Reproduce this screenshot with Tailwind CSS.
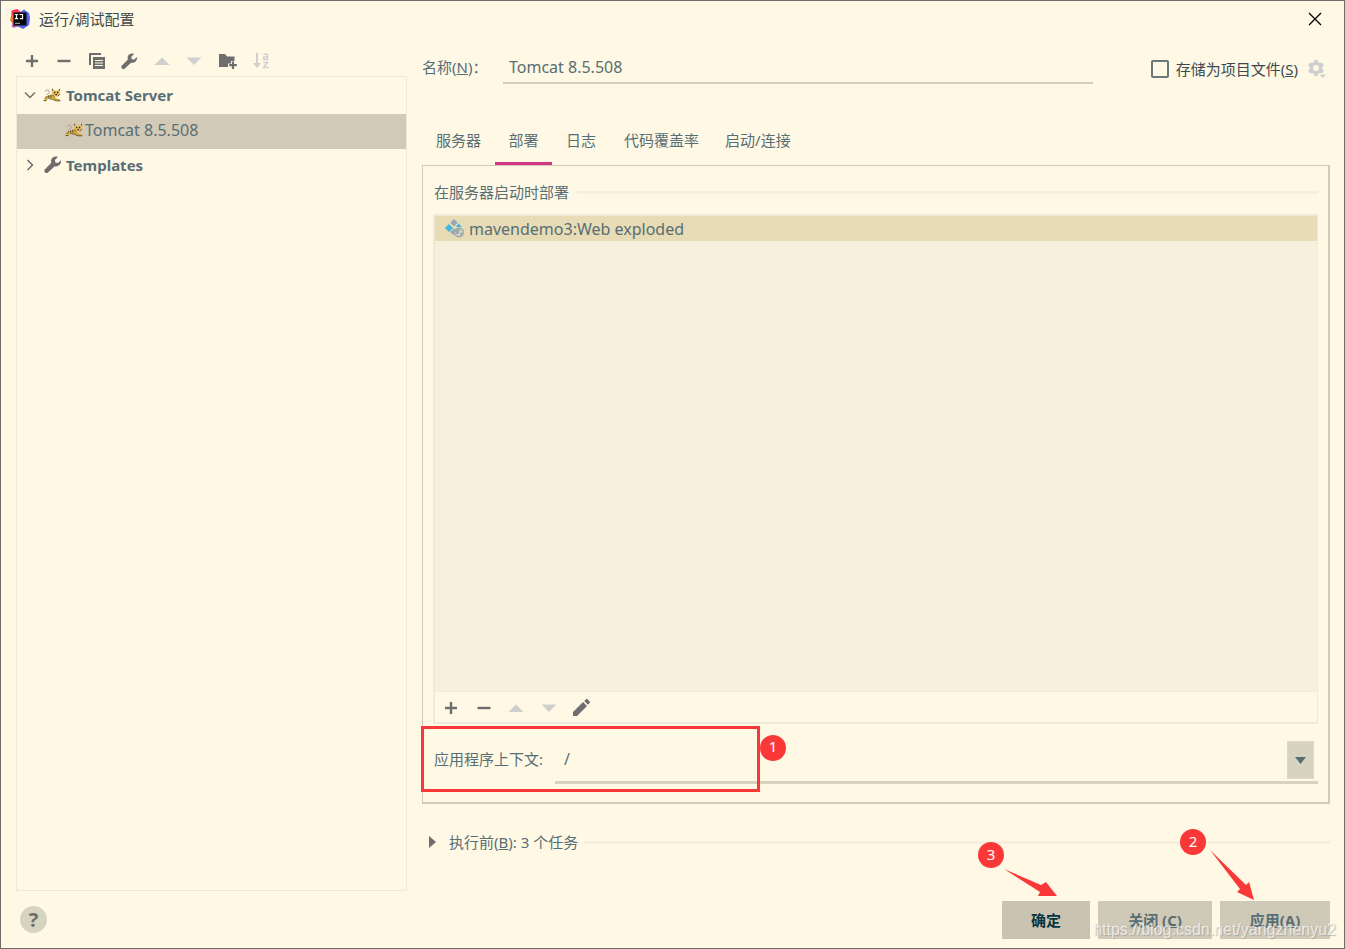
<!DOCTYPE html>
<html lang="zh-CN">
<head>
<meta charset="utf-8">
<title>运行/调试配置</title>
<script src="https://cdn.jsdelivr.net/npm/@tailwindcss/browser@4"></script>
</head>
<body class="bg-[#fff8e4] text-[15px] leading-5 text-[#586e75] font-['Noto_Sans','Noto_Sans_CJK_SC',sans-serif]">
<svg class="hidden">
  <defs>
    <symbol id="plus" viewBox="0 0 16 16"><path d="M8 2v12M2 8h12" stroke="currentColor" stroke-width="2.4" fill="none"/></symbol>
    <symbol id="minus" viewBox="0 0 16 16"><path d="M1.500 8h13" stroke="currentColor" stroke-width="2.400" fill="none"/></symbol>
    <symbol id="up" viewBox="0 0 16 16"><path d="M8 4.500l7.500 7.500H.5z" fill="currentColor"/></symbol>
    <symbol id="down" viewBox="0 0 16 16"><path d="M8 12L.5 4.500h15z" fill="currentColor"/></symbol>
    <symbol id="wrench" viewBox="0 0 18 18"><path d="M17 4.200l-3 2.800-2.600-.4-.5-2.700L13.800 1C11.200 0 8.300 1 7.300 3.500c-.4 1.100-.4 2.200 0 3.300L.8 13.500c-1 1-.4 2.200.3 2.900.8.800 2 1 2.900.1l6.700-6.300c2.900 1 6.900-1.500 6.300-6z" fill="currentColor"/></symbol>
    <symbol id="cat" viewBox="0 0 18 14">
      <path d="M3.500 6.500C6 6 6.800 4.500 6 3 5 1.300 2.500 1.800 2.200 3.800" fill="none" stroke="#a9a698" stroke-width="1"/>
      <path d="M2 11.500L4 8l4-1.500 3 1.500 2.500 2.500 3.500.7v1.300h-3.500L9 10.500 5.500 10 3.500 12.500H1z" fill="#d9a832"/>
      <path d="M.5 12.600h3M5.500 10.500l4 .7 3.500 1.600h4.500M4 8L1.500 11" fill="none" stroke="#5e4a1c" stroke-width=".9"/>
      <path d="M9.300.8l2.200 1.700h3L16.700.8 17 6l-2.500 2.400h-3L9 6z" fill="#e6bd5c"/>
      <path d="M9.400.8v1.800M16.600.8v1.800M5.500 7.500v2M7.800 7v2.500M9.200 6.500l2 2M16.800 6.300l-2 2" stroke="#4a3f22" stroke-width=".9"/>
      <path d="M11 4.500h1.200M14 4.500h1.200M12.500 6.700h1.400" stroke="#201e18" stroke-width="1.300"/>
    </symbol>
  </defs>
</svg>
<div class="relative flex min-h-screen flex-col border border-[#706c69]">
  <header class="flex h-9 items-center pl-[9px] pr-[22px] text-[#3c4a50]">
    <svg class="size-5" viewBox="0 0 20 20">
      <linearGradient id="warm" x1="0" y1="0" x2="0" y2="1"><stop offset="0" stop-color="#fb1f66"/><stop offset=".5" stop-color="#fc7a24"/><stop offset="1" stop-color="#b14ad0"/></linearGradient>
      <linearGradient id="cool" x1="0" y1="0" x2="1" y2="1"><stop offset="0" stop-color="#c644b8"/><stop offset=".4" stop-color="#3f74f0"/><stop offset="1" stop-color="#6a4ff0"/></linearGradient>
      <path d="M1.500 1.500L7 0l5 4v12l-8 2.800-2.300-1 .8-3.300L0 11l1.200-4z" fill="url(#warm)"/><path d="M10 3l4-2.500 5 3.500 1 5-1 7-6 4-6-3z" fill="url(#cool)"/><path d="M3.500 3.500h13v13h-13z" fill="#080808"/><path d="M4.800 5.500h3.400M6.500 5.500v4.300M4.800 9.700h3.400M9.500 5.500h3v4.200H9.800" stroke="#fff" stroke-width="1.200" fill="none"/><path d="M5 14.300h5" stroke="#bbb" stroke-width="1"/></svg>
    <h1 class="ml-[9px] flex-1">运行/调试配置</h1>
    <button aria-label="关闭" class="text-black"><svg class="size-[14px]" viewBox="0 0 14 14"><path d="M1 1l12 12M13 1L1 13" stroke="currentColor" stroke-width="1.300"/></svg></button>
  </header>
  <div class="flex flex-1 pl-[15px] pr-[14px]">
    <aside class="flex w-[391px] shrink-0 flex-col">
      <div class="ml-2 flex h-[39px] w-[245px] items-center justify-between pt-[9px] text-[#6e6e6e]">
        <button aria-label="添加"><svg class="size-4"><use href="#plus"/></svg></button>
        <button aria-label="移除"><svg class="size-4"><use href="#minus"/></svg></button>
        <button aria-label="复制"><svg class="size-4" viewBox="0 0 16 16"><path d="M1 12V1h11" fill="none" stroke="currentColor" stroke-width="2"/><path d="M4 4h12v12H4z" fill="currentColor"/><path d="M6 7.500h8M6 10h8M6 12.500h8" stroke="#fff8e4" stroke-width="1"/></svg></button>
        <button aria-label="编辑模板"><svg class="size-[17px]"><use href="#wrench"/></svg></button>
        <button aria-label="上移" disabled class="text-[#cfcfcf]"><svg class="size-4"><use href="#up"/></svg></button>
        <button aria-label="下移" disabled class="text-[#cfcfcf]"><svg class="size-4"><use href="#down"/></svg></button>
        <button aria-label="新建文件夹"><svg class="h-4 w-[18px]" viewBox="0 0 18 16"><path d="M0 1h6l2 2.500h7.500V8H12v2.500H9V14H0z" fill="currentColor"/><path d="M14 8.500v7.500M10.200 12.200h7.600" stroke="currentColor" stroke-width="2.200"/></svg></button>
        <button aria-label="排序" disabled class="text-[#cfcfcf]"><svg class="size-4" viewBox="0 0 16 16"><path d="M4 0v11" stroke="currentColor" stroke-width="2"/><path d="M0 10h8l-4 5z" fill="currentColor"/><path d="M10.500 1.300h4V6.500h-3.700V3.900h3.500M10.300 9.500h4.200l-4 5h5" stroke="currentColor" stroke-width="1.500" fill="none"/></svg></button>
      </div>
      <ul class="flex-1 border border-[#ece9d9] pt-0.5">
        <li class="flex h-[35px] items-center pb-[3px] pl-[7px] font-bold"><svg class="h-3 w-3" viewBox="0 0 12 12"><path d="M1 3.500l5 5 5-5" fill="none" stroke="#6e6e6e" stroke-width="1.500"/></svg><svg class="ml-[7px] mr-[5px] h-[14px] w-[18px]"><use href="#cat"/></svg>Tomcat Server</li>
        <li class="flex h-[35px] items-center bg-[#d2cab7] pb-[3px] pl-12 text-base"><svg class="mr-0.5 h-[14px] w-[18px]"><use href="#cat"/></svg>Tomcat 8.5.508</li>
        <li class="flex h-[35px] items-center pb-[3px] pl-[7px] font-bold"><svg class="h-3 w-3" viewBox="0 0 12 12"><path d="M3.500 1l5 5-5 5" fill="none" stroke="#6e6e6e" stroke-width="1.500"/></svg><svg class="ml-2 mr-1 size-[18px] text-[#6e6e6e]"><use href="#wrench"/></svg>Templates</li>
      </ul>
    </aside>
    <main class="ml-[15px] flex min-w-0 flex-1 flex-col">
      <div class="flex h-[47px] items-end">
        <label for="name" class="w-[81px] pb-[7px]">名称(<u>N</u>)：</label>
        <input id="name" value="Tomcat 8.5.508" class="h-8 min-w-0 flex-1 border-b-2 border-[#d5ceb9] px-1.5 text-base outline-none">
        <label class="ml-[58px] flex items-center gap-[7px] pb-[5px] text-[#3c4a50]"><input type="checkbox" class="size-[18px] appearance-none rounded-xs border-2 border-[#6b777a]"><span>存储为项目文件(<u>S</u>)</span></label>
        <button aria-label="存储选项" disabled class="ml-[10px] mr-1 pb-1.5"><svg class="h-[18px] w-[18px] text-[#cfcfcf]" viewBox="0 0 18 18"><circle cx="8" cy="8" r="4.600" fill="none" stroke="currentColor" stroke-width="3.400"/><path d="M8 0v3M8 13v3M1 4l2.700 1.500M12.300 10.500L15 12M1 12l2.700-1.500M12.300 5.500L15 4" stroke="currentColor" stroke-width="4"/><path d="M10.500 13h8v5h-8z" fill="#fff8e4"/><path d="M11.500 14.500H18L14.700 18z" fill="currentColor"/></svg></button>
      </div>
      <nav class="mt-[35px] flex h-[46px]">
        <button class="px-[14px] pb-[5px]">服务器</button>
        <button class="w-[57px] border-b-3 border-[#d33682] pb-0.5">部署</button>
        <button class="px-[14px] pb-[5px]">日志</button>
        <button class="px-[14px] pb-[5px]">代码覆盖率</button>
        <button class="px-3 pb-[5px]">启动/连接</button>
      </nav>
      <section class="relative flex flex-1 flex-col border-b-2 border-l border-r-2 border-t border-[#d2cab7] px-2.5 pb-[18px] pt-4">
        <h2 class="flex items-center gap-2 pl-px after:h-[3px] after:flex-1 after:bg-[#f6efdd]">在服务器启动时部署</h2>
        <div class="mt-3 flex flex-1 flex-col border-b-2 border-l-2 border-r border-t-2 border-[#efead8]">
          <ul class="flex-1 border-b border-[#efead8] bg-[#f6f0dd]">
            <li class="flex h-[25px] items-center bg-[#e7dcb5] pl-[10px] text-base"><svg class="mr-[5px] size-[19px]" viewBox="0 0 19 19"><path d="M9 0l3.700 3.700L9 7.400 5.300 3.700z" fill="#9aa7b0"/><path d="M4 5l4 4-4 4-4-4z" fill="#40b6e0"/><path d="M13.500 4.500L17 8h-6z" fill="#40b6e0"/><path d="M9 9.500l1 1-1 6-4-3.500z" fill="#9aa7b0"/><circle cx="14" cy="13.500" r="4.300" fill="#dcd6ba" stroke="#9aa7b0" stroke-width="1.400"/><path d="M10 12l3-2.500 2.500 1.500-1.500 1.500v2l-2 1zM15 13.500l3 .5-2.500 3.500z" fill="#9aa7b0"/></svg>mavendemo3:Web exploded</li>
          </ul>
          <div class="ml-2 flex h-[30px] w-[147px] items-center justify-between pt-px text-[#6e6e6e]">
            <button aria-label="添加"><svg class="size-4"><use href="#plus"/></svg></button>
            <button aria-label="移除"><svg class="size-4"><use href="#minus"/></svg></button>
            <button aria-label="上移" disabled class="text-[#cfcfcf]"><svg class="size-4"><use href="#up"/></svg></button>
            <button aria-label="下移" disabled class="text-[#cfcfcf]"><svg class="size-4"><use href="#down"/></svg></button>
            <button aria-label="编辑"><svg class="size-[17px]" viewBox="0 0 17 17"><path d="M0 13L10 3l4 4L4 17H0zM11.200 2L13 .3c.5-.4 1-.4 1.500 0L16.700 2.500c.4.500.4 1 0 1.500L15 5.800z" fill="currentColor"/></svg></button>
          </div>
        </div>
        <div class="mt-[13px] flex h-[47px] items-stretch pl-px">
          <label for="ctx" class="w-[121px] shrink-0 self-center pb-1">应用程序上下文:</label>
          <div class="flex flex-1 items-start border-b-3 border-[#d9d2be] pr-1">
            <input id="ctx" value="/" class="h-full min-w-0 flex-1 px-[9px] text-base outline-none">
            <button aria-label="展开列表" class="mt-1 flex h-[38px] w-[27px] items-center justify-center border border-[#dfdac7] bg-[#d7d3c1]"><svg class="h-[7px] w-[11px]" viewBox="0 0 11 7"><path d="M0 0h11L5.500 7z" fill="#586e75"/></svg></button>
          </div>
        </div>
        <div class="pointer-events-none absolute -left-0.5 bottom-2.5 h-[66px] w-[339px] border-3 border-[#fb3838]"></div>
        <span class="absolute bottom-[41px] left-[337px] flex size-[26px] items-center justify-center rounded-full bg-[#fb3838] pb-1 text-white">1</span>
      </section>
      <button class="mt-7 flex items-center pl-[7px] after:ml-1.5 after:h-[3px] after:flex-1 after:bg-[#f6efdd]"><svg class="mr-[13px] h-3 w-[7px]" viewBox="0 0 7 12"><path d="M0 0l7 6-7 6z" fill="#6e6e6e"/></svg><span>执行前(<u>B</u>): 3 个任务</span></button>
      <div class="h-[39px]"></div>
    </main>
  </div>
  <footer class="flex h-[57px] items-center gap-2 pl-[19px] pr-[14px] font-bold">
    <button aria-label="帮助" class="mr-auto size-[27px] rounded-full bg-[#d7d3c1] text-xl leading-[27px] text-[#6e6e6e]">?</button>
    <button class="h-[38px] w-[88px] bg-[#cac3b1] text-[#073642]">确定</button>
    <button class="h-[38px] w-[114px] bg-[#cfcab8]">关闭 (<u>C</u>)</button>
    <button class="h-[38px] w-[110px] bg-[#cfcab8]">应用(<u>A</u>)</button>
  </footer>
  <div class="pointer-events-none absolute bottom-0 right-0 h-[121px] w-[368px]">
    <span class="absolute left-0.5 top-[15px] flex size-[26px] items-center justify-center rounded-full bg-[#fb3838] pb-0.5 text-white">3</span>
    <span class="absolute left-[204px] top-0.5 flex size-[26px] items-center justify-center rounded-full bg-[#fb3838] pb-0.5 text-white">2</span>
    <svg class="absolute inset-0 size-full" viewBox="0 0 368 121"><path d="M28 42l37 16 5-3 11 14H62l2-4zM234 23l36 35 3-3 5 18-17-8 3-3z" fill="#fb3838"/></svg>
    <span class="absolute bottom-2 right-2 font-['Liberation_Sans',sans-serif] text-base leading-5 text-white/70 [text-shadow:1px_1px_1px_#8888]">https://blog.csdn.net/yangzhenyu2</span>
  </div>
</div>
</body>
</html>
